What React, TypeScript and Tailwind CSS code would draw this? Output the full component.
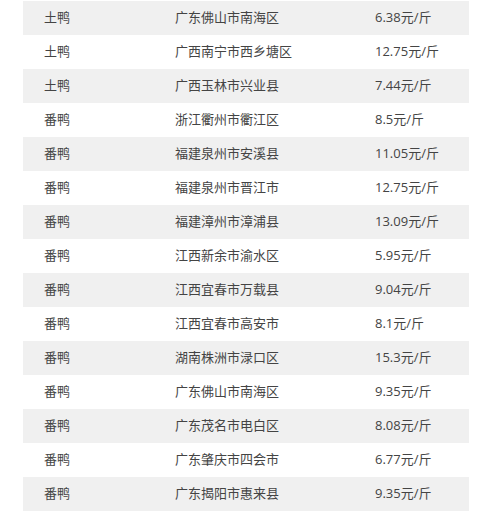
const rows: [string, string, string][] = [
  ['土鸭', '广东佛山市南海区', '6.38元/斤'],
  ['土鸭', '广西南宁市西乡塘区', '12.75元/斤'],
  ['土鸭', '广西玉林市兴业县', '7.44元/斤'],
  ['番鸭', '浙江衢州市衢江区', '8.5元/斤'],
  ['番鸭', '福建泉州市安溪县', '11.05元/斤'],
  ['番鸭', '福建泉州市晋江市', '12.75元/斤'],
  ['番鸭', '福建漳州市漳浦县', '13.09元/斤'],
  ['番鸭', '江西新余市渝水区', '5.95元/斤'],
  ['番鸭', '江西宜春市万载县', '9.04元/斤'],
  ['番鸭', '江西宜春市高安市', '8.1元/斤'],
  ['番鸭', '湖南株洲市渌口区', '15.3元/斤'],
  ['番鸭', '广东佛山市南海区', '9.35元/斤'],
  ['番鸭', '广东茂名市电白区', '8.08元/斤'],
  ['番鸭', '广东肇庆市四会市', '6.77元/斤'],
  ['番鸭', '广东揭阳市惠来县', '9.35元/斤'],
];

export default function App() {
  return (
    <div className="w-[494px] h-[525px] bg-white pt-[1px] pl-[23px] font-['Open_Sans','Noto_Sans_CJK_SC',sans-serif] text-[13px] text-[#444]">
      <div className="w-[446px]">
        {rows.map(([kind, place, price], i) => (
          <div
            key={i}
            className={`grid grid-cols-[131px_200px_115px] h-[34px] items-center pl-[21px] ${i % 2 === 0 ? 'bg-[#f0f0f0]' : 'bg-white'}`}
          >
            <span>{kind}</span>
            <span>{place}</span>
            <span>{price}</span>
          </div>
        ))}
      </div>
    </div>
  );
}
